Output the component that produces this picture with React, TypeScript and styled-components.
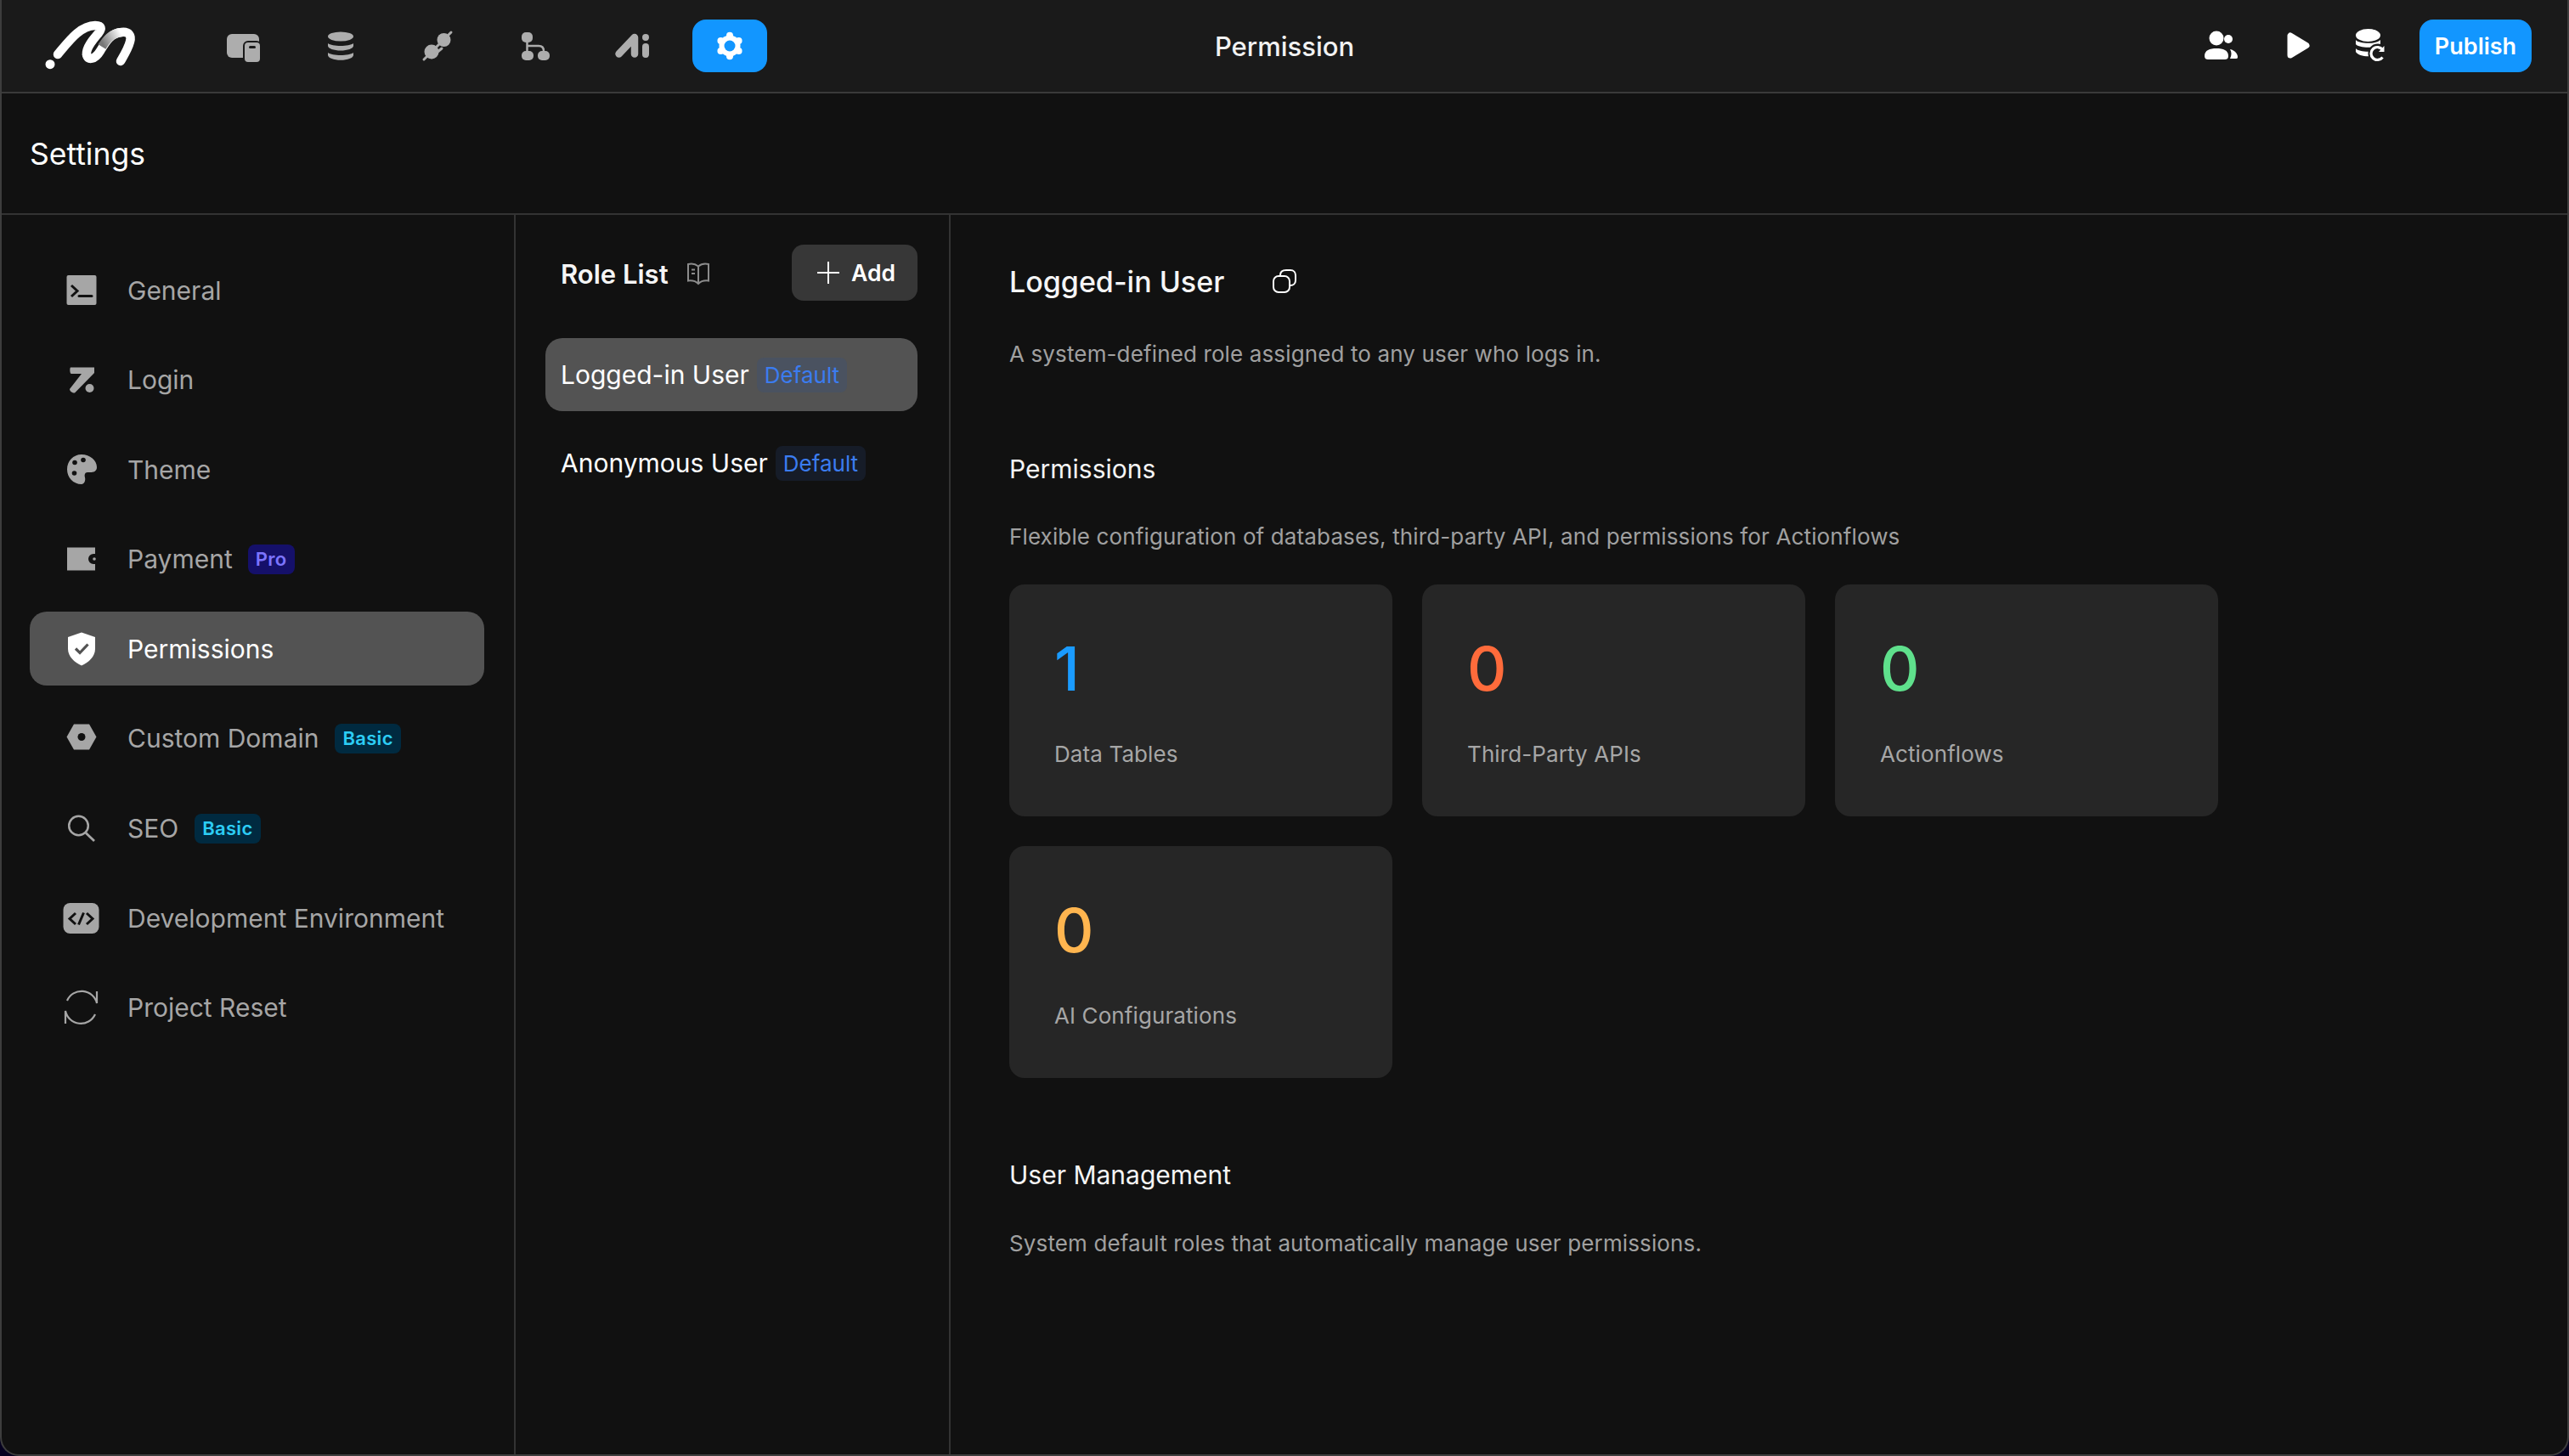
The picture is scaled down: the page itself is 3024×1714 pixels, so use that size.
import React from 'react'
import styled, { createGlobalStyle } from 'styled-components'

const GlobalStyle = createGlobalStyle`
  html, body {
    margin: 0;
    padding: 0;
    background: #05001f;
  }
  * {
    box-sizing: border-box;
  }
  body {
    font-family: Inter, "Noto Sans", sans-serif;
    -webkit-font-smoothing: antialiased;
  }
`

const Frame = styled.div`
  width: 3024px;
  height: 1714px;
  display: flex;
  flex-direction: column;
  overflow: hidden;
  background: #111111;
  border: 2px solid #3d3d3d;
  border-top: 0;
  border-radius: 0 0 22px 22px;
`

const TopBar = styled.header`
  height: 110px;
  flex: none;
  display: grid;
  grid-template-columns: 1fr auto 1fr;
  align-items: center;
  background: #1a1a1a;
  border-bottom: 2px solid #3a3a3a;
`

const BarLeft = styled.div`
  display: flex;
  align-items: center;
  padding-left: 38px;
`

const Logo = styled.svg`
  width: 130px;
  height: 80px;
  margin-right: 72px;
  flex: none;
`

const NavList = styled.nav`
  display: flex;
  gap: 26.6px;
`

const NavButton = styled.div<{ $active?: boolean }>`
  width: 88px;
  height: 62px;
  display: flex;
  align-items: center;
  justify-content: center;
  border-radius: 16px;
  color: ${(p) => (p.$active ? '#ffffff' : '#adadad')};
  background: ${(p) => (p.$active ? '#1296ff' : 'transparent')};
`

const BarTitle = styled.div`
  font-size: 31px;
  font-weight: 500;
  color: #f2f2f2;
`

const BarRight = styled.div`
  display: flex;
  align-items: center;
  justify-content: flex-end;
  padding-right: 42px;
`

const ActionButton = styled.div`
  width: 88px;
  height: 62px;
  display: flex;
  align-items: center;
  justify-content: center;
  color: #ffffff;
`

const PublishButton = styled.div`
  width: 132px;
  height: 62px;
  margin-left: 14px;
  display: flex;
  align-items: center;
  justify-content: center;
  border-radius: 16px;
  background: #1296ff;
  color: #ffffff;
  font-size: 27px;
  font-weight: 600;
`

const PageHeader = styled.div`
  height: 143px;
  flex: none;
  display: flex;
  align-items: center;
  padding: 1px 0 0 33px;
  font-size: 35.5px;
  font-weight: 400;
  color: #ffffff;
  border-bottom: 2px solid #333333;
`

const Columns = styled.div`
  flex: 1;
  display: flex;
  min-height: 0;
`

const Sidebar = styled.aside`
  width: 605px;
  flex: none;
  display: flex;
  flex-direction: column;
  gap: 18.6px;
  padding: 45px 35px 0 33px;
  border-right: 2px solid #333333;
`

const SideItem = styled.div<{ $active?: boolean }>`
  height: 87px;
  flex: none;
  display: flex;
  align-items: center;
  padding-left: 39px;
  border-radius: 20px;
  font-size: 30px;
  color: ${(p) => (p.$active ? '#ffffff' : '#a6a6a6')};
  background: ${(p) => (p.$active ? '#535353' : 'transparent')};
`

const SideIcon = styled.svg`
  width: 44px;
  height: 44px;
  flex: none;
  margin-right: 32px;
`

const tones = {
  pro: { bg: '#15106a', fg: '#7c74ff', weight: 600, size: 22, height: 35, gap: 18, track: 0.3 },
  basic: { bg: '#002a40', fg: '#2ccdf5', weight: 600, size: 22, height: 35, gap: 19, track: 0.3 },
  role: { bg: '#161c28', fg: '#3b7cf0', weight: 400, size: 26, height: 41, gap: 9, track: 0 },
  roleActive: { bg: '#4a5260', fg: '#3b7cf0', weight: 400, size: 26, height: 41, gap: 9, track: 0 },
}

const Badge = styled.span<{ $tone: keyof typeof tones }>`
  display: inline-flex;
  align-items: center;
  justify-content: center;
  height: ${(p) => tones[p.$tone].height}px;
  padding: 0 9px;
  margin-left: ${(p) => tones[p.$tone].gap}px;
  border-radius: 8px;
  font-size: ${(p) => tones[p.$tone].size}px;
  font-weight: ${(p) => tones[p.$tone].weight};
  letter-spacing: ${(p) => tones[p.$tone].track}px;
  color: ${(p) => tones[p.$tone].fg};
  background: ${(p) => tones[p.$tone].bg};
`

const RolePanel = styled.section`
  width: 512px;
  flex: none;
  padding: 35px 37px 0 35px;
  border-right: 2px solid #333333;
`

const RoleHeader = styled.div`
  height: 66px;
  display: flex;
  align-items: center;
  justify-content: space-between;
  padding-left: 18px;
  margin-bottom: 44px;
`

const RoleTitle = styled.div`
  display: flex;
  align-items: center;
  gap: 21px;
  padding-top: 2px;
  font-size: 31px;
  font-weight: 600;
  color: #f5f5f5;
`

const AddButton = styled.div`
  width: 148px;
  height: 66px;
  display: flex;
  align-items: center;
  justify-content: center;
  gap: 14px;
  padding-left: 4px;
  border-radius: 14px;
  background: #373737;
  color: #ffffff;
  font-size: 26.5px;
  font-weight: 600;
`

const RoleList = styled.div`
  display: flex;
  flex-direction: column;
  gap: 18px;
`

const RoleRow = styled.div<{ $active?: boolean }>`
  height: 86px;
  display: flex;
  align-items: center;
  padding-left: 18px;
  border-radius: 20px;
  font-size: 30px;
  color: #ffffff;
  background: ${(p) => (p.$active ? '#535353' : 'transparent')};
`

const Detail = styled.main`
  flex: 1;
  padding: 56px 0 0 69px;
`

const DetailTitle = styled.div`
  height: 44px;
  display: flex;
  align-items: center;
  gap: 56px;
  font-size: 34px;
  font-weight: 500;
  color: #f5f5f5;
`

const SectionTitle = styled.div<{ $top: number }>`
  height: 40px;
  margin-top: ${(p) => p.$top}px;
  line-height: 40px;
  font-size: 30px;
  font-weight: 400;
  color: #f5f5f5;
`

const Note = styled.div<{ $top: number }>`
  height: 40px;
  margin-top: ${(p) => p.$top}px;
  line-height: 40px;
  font-size: 26px;
  letter-spacing: 0.13px;
  color: #a0a0a0;
`

const CardGrid = styled.div`
  display: grid;
  grid-template-columns: repeat(3, 451px);
  grid-auto-rows: 273px;
  gap: 35px;
  margin-top: 36px;
`

const Card = styled.div`
  padding: 64px 0 0 53px;
  border-radius: 18px;
  background: #262626;
`

const CardNumber = styled.div<{ $color: string }>`
  height: 70px;
  line-height: 70px;
  font-size: 72px;
  font-weight: 500;
  color: ${(p) => p.$color};
`

const CardLabel = styled.div`
  height: 36px;
  margin-top: 48px;
  line-height: 36px;
  font-size: 26px;
  letter-spacing: 0.1px;
  color: #a6a6a6;
`

const Glyph = ({ children }: { children: React.ReactNode }) => (
  <svg width="44" height="44" viewBox="0 0 44 44" fill="currentColor">
    {children}
  </svg>
)

const gearTeeth = [-90, -30, 30, 90, 150, 210]

const navIcons: React.ReactNode[] = [
  <Glyph key="pages">
    <rect x="3" y="8" width="38" height="28" rx="6" />
    <rect x="23" y="17" width="20" height="25" rx="5" fill="currentColor" stroke="#1a1a1a" strokeWidth="2" />
    <rect x="29" y="22" width="8" height="3" rx="1.5" fill="#1a1a1a" />
  </Glyph>,
  <Glyph key="data">
    <ellipse cx="22" cy="11" rx="15" ry="5.5" />
    <path d="M7 19C12 23 32 23 37 19V22C37 25 30 27.5 22 27.5C14 27.5 7 25 7 22Z" />
    <path d="M7 30C12 34 32 34 37 30V33C37 36 30 38.8 22 38.8C14 38.8 7 36 7 33Z" />
  </Glyph>,
  <Glyph key="plug">
    <circle cx="29.5" cy="15" r="8" />
    <path d="M25 9L35 20" stroke="currentColor" strokeWidth="3" />
    <path d="M33 11L38 6" stroke="currentColor" strokeWidth="3" strokeLinecap="round" />
    <circle cx="15" cy="29" r="8.5" />
    <path d="M20 24L25 19M21 30L27 25" stroke="currentColor" strokeWidth="3" strokeLinecap="round" />
    <path d="M10 34L6 38" stroke="currentColor" strokeWidth="3" strokeLinecap="round" />
  </Glyph>,
  <Glyph key="flow">
    <rect x="6" y="6" width="13" height="12" rx="5" />
    <rect x="6" y="28" width="14" height="11" rx="5" />
    <rect x="25" y="28" width="14" height="11" rx="5" />
    <path d="M12.5 18V28M12.5 22H26Q32 22 32 28" fill="none" stroke="currentColor" strokeWidth="2.5" />
  </Glyph>,
  <Glyph key="ai">
    <path d="M6.5 31.5L25 12V31.5" fill="none" stroke="currentColor" strokeWidth="8.5" strokeLinecap="round" strokeLinejoin="round" />
    <circle cx="38" cy="12" r="4" />
    <rect x="34" y="19" width="8" height="17" rx="4" />
  </Glyph>,
  <Glyph key="settings">
    <circle cx="22" cy="22" r="12.5" />
    {gearTeeth.map((a) => (
      <circle
        key={a}
        cx={22 + 12.2 * Math.cos((a * Math.PI) / 180)}
        cy={22 + 12.2 * Math.sin((a * Math.PI) / 180)}
        r="4"
      />
    ))}
    <circle cx="22" cy="22" r="6.5" fill="#1296ff" />
  </Glyph>,
]

const navIds = ['pages', 'data', 'plug', 'flow', 'ai', 'settings']

const sideItems: { label: string; badge?: 'pro' | 'basic'; active?: boolean; icon: React.ReactNode }[] = [
  {
    label: 'General',
    icon: (
      <>
        <rect x="4.5" y="4" width="35" height="35" rx="2" fill="currentColor" />
        <path d="M10 16L17 22.5L10 29" fill="none" stroke="#111111" strokeWidth="3" />
        <path d="M19 28.5H34" stroke="#111111" strokeWidth="3" strokeLinecap="round" />
      </>
    ),
  },
  {
    label: 'Login',
    icon: (
      <>
        <path d="M9 7.5H37V14L14 37.5C12 38 8 36 8 33L22 15H10C8 15 8 8 9 7.5Z" fill="currentColor" />
        <circle cx="31.5" cy="32" r="5" fill="currentColor" />
      </>
    ),
  },
  {
    label: 'Theme',
    icon: (
      <>
        <path
          d="M22 4C32 4 40 11 40 19C40 24 36 25 32 25H29C26 25 25 28 26 31C27 35 25 39 22 39C12 39 5 31 5 21.5C5 12 12 4 22 4Z"
          fill="currentColor"
        />
        <circle cx="14" cy="13.5" r="2.8" fill="#111111" />
        <circle cx="24" cy="10.5" r="2.8" fill="#111111" />
        <circle cx="13.5" cy="26" r="2.8" fill="#111111" />
      </>
    ),
  },
  {
    label: 'Payment',
    badge: 'pro',
    icon: (
      <>
        <path d="M5 8.5H38V16H36A6 6 0 0 0 36 28H38V35.5H5Z" fill="currentColor" />
        <circle cx="37" cy="22" r="1.8" fill="currentColor" />
      </>
    ),
  },
  {
    label: 'Permissions',
    active: true,
    icon: (
      <>
        <path d="M22 2.5L38 8V22C38 31 30 38 22 41.5C14 38 6 31 6 22V8Z" fill="currentColor" />
        <path d="M15 21.5L20 26.5L29.5 16.5" fill="none" stroke="#535353" strokeWidth="3.2" />
      </>
    ),
  },
  {
    label: 'Custom Domain',
    badge: 'basic',
    icon: (
      <>
        <path d="M4.5 20.5L13 5.5H31L39.5 20.5L31 35.5H13Z" fill="currentColor" />
        <circle cx="22" cy="20.5" r="4.5" fill="#111111" />
      </>
    ),
  },
  {
    label: 'SEO',
    badge: 'basic',
    icon: (
      <>
        <circle cx="18.5" cy="19" r="11.3" fill="none" stroke="currentColor" strokeWidth="2.5" />
        <path d="M27 27.5L37 37" stroke="currentColor" strokeWidth="2.8" />
      </>
    ),
  },
  {
    label: 'Development Environment',
    icon: (
      <>
        <rect x="0.5" y="4" width="42" height="36" rx="8" fill="currentColor" />
        <path d="M15 16L8 22.5L15 29M28 16L35 22.5L28 29M24.5 15.5L18.5 29.5" fill="none" stroke="#111111" strokeWidth="3" />
      </>
    ),
  },
  {
    label: 'Project Reset',
    icon: (
      <>
        <path d="M5 14A18.5 18.5 0 0 1 40 17V3" fill="none" stroke="currentColor" strokeWidth="2.2" />
        <path d="M38 30A18.5 18.5 0 0 1 3 26V41" fill="none" stroke="currentColor" strokeWidth="2.2" />
      </>
    ),
  },
]

const cards = [
  { value: '1', label: 'Data Tables', color: '#1a9bff' },
  { value: '0', label: 'Third-Party APIs', color: '#ff6b3b' },
  { value: '0', label: 'Actionflows', color: '#5fe08c' },
  { value: '0', label: 'AI Configurations', color: '#ffb54f' },
]

const App: React.FC = () => {
  return (
    <>
      <GlobalStyle />
      <Frame>
        <TopBar>
          <BarLeft>
            <Logo viewBox="0 0 130 80">
              <defs>
                <linearGradient id="logoFold" gradientUnits="userSpaceOnUse" x1="80" y1="36" x2="102" y2="24">
                  <stop offset="0" stopColor="#777777" />
                  <stop offset="1" stopColor="#ffffff" />
                </linearGradient>
              </defs>
              <circle cx="19" cy="61.7" r="5.5" fill="#fff" />
              <path
                d="M62 50C63 58 72 56 78 46C84 36 90 25 103 24C112 23 115 28 113 35C111 43 106 51 102 58"
                fill="none"
                stroke="#fff"
                strokeWidth="10.5"
                strokeLinecap="round"
              />
              <path d="M80 41C85 33 91 25 103 24" fill="none" stroke="url(#logoFold)" strokeWidth="10.5" />
              <path
                d="M28 50C40 36 54 16 72 16C80 16 80 20 76 25C70 32 61 42 62 50"
                fill="none"
                stroke="#fff"
                strokeWidth="10.5"
                strokeLinecap="round"
              />
            </Logo>
            <NavList>
              {navIcons.map((icon, i) => (
                <NavButton key={navIds[i]} $active={navIds[i] === 'settings'}>
                  {icon}
                </NavButton>
              ))}
            </NavList>
          </BarLeft>
          <BarTitle>Permission</BarTitle>
          <BarRight>
            <ActionButton>
              <Glyph>
                <circle cx="17" cy="13" r="8.5" />
                <circle cx="31" cy="14" r="5" />
                <path d="M3 34C3 27 9 25 17 25C25 25 31 27 31 34C31 37 29 38 27 38H7C5 38 3 37 3 34Z" />
                <path d="M33 26C39 27 42 32 42 35C42 37 41 37 39 37H33C35 33 35 29 33 26Z" />
              </Glyph>
            </ActionButton>
            <ActionButton>
              <Glyph>
                <path d="M16 10V33L35 21.5Z" stroke="currentColor" strokeWidth="7" strokeLinejoin="round" />
              </Glyph>
            </ActionButton>
            <ActionButton>
              <Glyph>
                <ellipse cx="19.5" cy="9.5" rx="14.5" ry="7.5" />
                <path d="M5 15C9 20 30 20 34 15V20C30 25 9 25 5 20Z" />
                <path d="M5 25C9 30 30 30 34 25V29C30 36 9 36 5 29Z" />
                <circle cx="31" cy="31" r="11.5" fill="#1a1a1a" />
                <path d="M36.5 26.5A7.5 7.5 0 1 0 36.5 35.5" fill="none" stroke="currentColor" strokeWidth="3.2" />
                <path d="M38.5 22V29H32Z" />
              </Glyph>
            </ActionButton>
            <PublishButton>Publish</PublishButton>
          </BarRight>
        </TopBar>
        <PageHeader>Settings</PageHeader>
        <Columns>
          <Sidebar>
            {sideItems.map((item) => (
              <SideItem key={item.label} $active={item.active}>
                <SideIcon viewBox="0 0 44 44">{item.icon}</SideIcon>
                {item.label}
                {item.badge && <Badge $tone={item.badge}>{item.badge === 'pro' ? 'Pro' : 'Basic'}</Badge>}
              </SideItem>
            ))}
          </Sidebar>
          <RolePanel>
            <RoleHeader>
              <RoleTitle>
                Role List
                <svg width="28" height="28" viewBox="0 0 28 28" fill="none" stroke="#8c8c8c" strokeWidth="2">
                  <path d="M14 5.5C11 3 6 2 2 3V22.5C6 22 11 23 14 26C17 23 22 22 26 22.5V3C22 2 17 3 14 5.5ZM14 5.5V26" />
                  <path d="M6 9.5H10M6 14H10" />
                </svg>
              </RoleTitle>
              <AddButton>
                <svg width="26" height="26" viewBox="0 0 26 26" stroke="#ffffff" strokeWidth="2">
                  <path d="M13 0V26M0 13H26" />
                </svg>
                Add
              </AddButton>
            </RoleHeader>
            <RoleList>
              <RoleRow $active>
                Logged-in User
                <Badge $tone="roleActive">Default</Badge>
              </RoleRow>
              <RoleRow>
                Anonymous User
                <Badge $tone="role">Default</Badge>
              </RoleRow>
            </RoleList>
          </RolePanel>
          <Detail>
            <DetailTitle>
              Logged-in User
              <svg width="30" height="30" viewBox="0 0 30 30" fill="none" stroke="#ffffff" strokeWidth="2">
                <rect x="2" y="9" width="19" height="19" rx="6" />
                <path d="M10 8C10 4 13 2 17 2H22C26 2 28 5 28 8V14C28 18 25 20 22 20" />
              </svg>
            </DetailTitle>
            <Note $top={44}>A system-defined role assigned to any user who logs in.</Note>
            <SectionTitle $top={95}>Permissions</SectionTitle>
            <Note $top={40}>Flexible configuration of databases, third-party API, and permissions for Actionflows</Note>
            <CardGrid>
              {cards.map((card) => (
                <Card key={card.label}>
                  <CardNumber $color={card.color}>{card.value}</CardNumber>
                  <CardLabel>{card.label}</CardLabel>
                </Card>
              ))}
            </CardGrid>
            <SectionTitle $top={94}>User Management</SectionTitle>
            <Note $top={41}>System default roles that automatically manage user permissions.</Note>
          </Detail>
        </Columns>
      </Frame>
    </>
  )
}

export default App
